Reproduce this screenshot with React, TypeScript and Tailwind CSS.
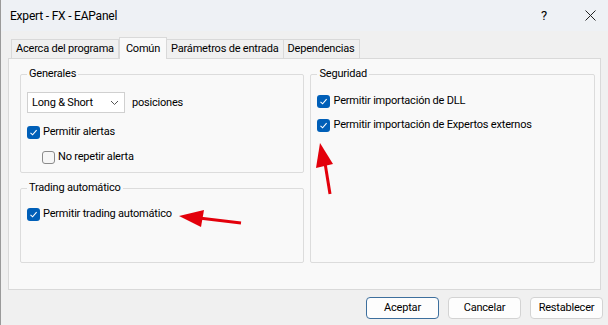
import React from 'react';

const font = { fontFamily: 'Roboto, "Noto Sans", sans-serif' };

const Check: React.FC<{ checked?: boolean }> = ({ checked }) =>
  checked ? (
    <span className="flex h-[13px] w-[13px] shrink-0 items-center justify-center rounded-[3px] bg-[#005fb8]">
      <svg width="9" height="9" viewBox="0 0 9 9">
        <path d="M1.5 4.8 L3.6 6.8 L7.6 2.2" fill="none" stroke="#fff" strokeWidth="1.1" />
      </svg>
    </span>
  ) : (
    <span className="h-[13px] w-[13px] shrink-0 rounded-[3px] border border-[#8b8b8b] bg-[#f6f6f6]" />
  );

const Row: React.FC<{ checked?: boolean; label: string; className?: string }> = ({ checked, label, className }) => (
  <div className={`flex h-[16px] items-center gap-[3px] ${className ?? ''}`}>
    <Check checked={checked} />
    <span>{label}</span>
  </div>
);

const Group: React.FC<{ title: string; className?: string; children?: React.ReactNode }> = ({ title, className, children }) => (
  <fieldset className={`rounded-[2px] border border-[#dcdcdc] px-[6px] ${className ?? ''}`}>
    <legend className="px-[2px] leading-[16px]">{title}</legend>
    {children}
  </fieldset>
);

export default function App() {
  return (
    <div className="relative flex h-[325px] w-[608px] flex-col overflow-hidden border-l border-[#9a9a9a] bg-[#f0f0f0] text-[11px] leading-[16px] tracking-[-0.2px] text-[#000]" style={font}>
      {/* title bar */}
      <div className="flex h-[31px] items-center bg-[#eef1f5] pl-[9px] pr-[12px] text-[12px]">
        <span className="flex-1">Expert - FX - EAPanel</span>
        <span className="mr-[38px] text-[13px]">?</span>
        <svg width="11" height="11" viewBox="0 0 11 11">
          <path d="M0.5 0.5 L10.5 10.5 M10.5 0.5 L0.5 10.5" stroke="#222" strokeWidth="1" />
        </svg>
      </div>

      {/* tabs */}
      <div className="flex h-[27px] items-end pl-[10px]">
        <div className="flex h-[19px] items-center border border-b-0 border-[#d9d9d9] bg-[#f0f0f0] px-[4px]">Acerca del programa</div>
        <div className="relative z-10 -mb-px flex h-[22px] items-center border border-b-0 border-[#d9d9d9] bg-[#f9f9f9] px-[6px]">Común</div>
        <div className="flex h-[19px] items-center border border-b-0 border-l-0 border-[#d9d9d9] bg-[#f0f0f0] px-[4px]">Parámetros de entrada</div>
        <div className="flex h-[19px] items-center border border-b-0 border-l-0 border-[#d9d9d9] bg-[#f0f0f0] px-[4px]">Dependencias</div>
      </div>

      {/* panel */}
      <div className="mx-[7px] flex h-[232px] gap-[6px] border border-[#d9d9d9] bg-[#f9f9f9] pl-[11px] pr-[5px] pt-[7px]">
        <div className="flex w-[286px] flex-col gap-[7px]">
          <Group title="Generales" className="h-[107px]">
            <div className="mt-[10px] flex items-center">
              <div className="flex h-[21px] w-[98px] items-center justify-between border border-[#d0d0d0] bg-white pl-[4px] pr-[5px]">
                <span>Long &amp; Short</span>
                <svg width="9" height="6" viewBox="0 0 9 6">
                  <path d="M1 1 L4.5 4.5 L8 1" fill="none" stroke="#555" strokeWidth="1" />
                </svg>
              </div>
              <span className="ml-[7px]">posiciones</span>
            </div>
            <Row checked label="Permitir alertas" className="mt-[11px]" />
            <Row label="No repetir alerta" className="ml-[15px] mt-[9px]" />
          </Group>
          <Group title="Trading automático" className="h-[83px]">
            <Row checked label="Permitir trading automático" className="mt-[10px]" />
          </Group>
        </div>
        <Group title="Seguridad" className="h-[197px] w-[286px]">
          <Row checked label="Permitir importación de DLL" className="mt-[11px]" />
          <Row checked label="Permitir importación de Expertos externos" className="mt-[8px]" />
        </Group>
      </div>

      {/* buttons */}
      <div className="flex flex-1 items-center justify-end gap-[9px] pr-[5px]">
        <button className="h-[22px] w-[73px] rounded-[4px] border border-[#3d6f9d] bg-[#fdfdfd]">Aceptar</button>
        <button className="h-[22px] w-[73px] rounded-[4px] border border-[#d3d3d3] bg-[#fdfdfd]">Cancelar</button>
        <button className="h-[22px] w-[73px] rounded-[4px] border border-[#d3d3d3] bg-[#fdfdfd]">Restablecer</button>
      </div>

      {/* annotation arrows */}
      <svg className="pointer-events-none absolute left-0 top-0" width="608" height="325">
        <line x1="198" y1="218" x2="240" y2="223" stroke="#e3000b" strokeWidth="3" />
        <polygon points="178,216 203,210 200,227" fill="#e3000b" />
        <line x1="324" y1="163" x2="329" y2="194" stroke="#e3000b" strokeWidth="3" />
        <polygon points="319,143 315,168 332,164" fill="#e3000b" />
      </svg>
    </div>
  );
}
